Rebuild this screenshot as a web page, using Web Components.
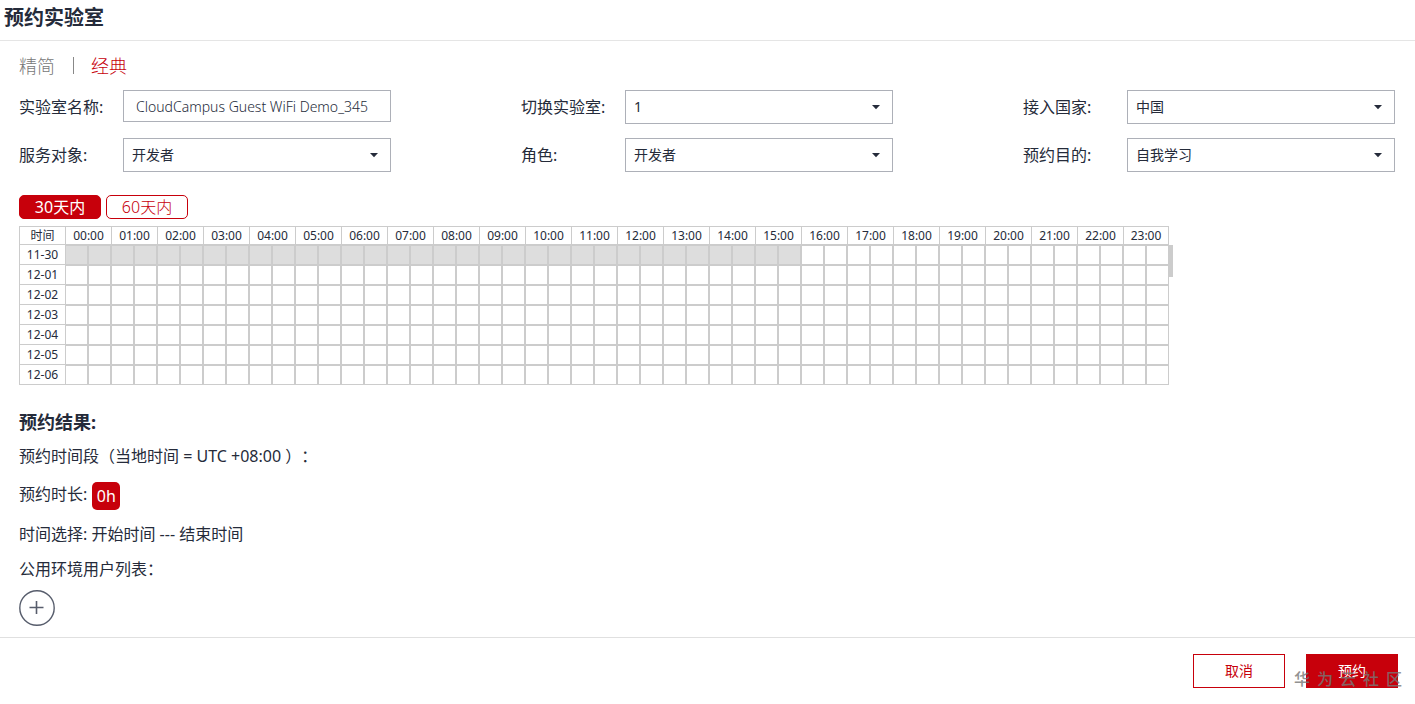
<!DOCTYPE html>
<html lang="zh-CN">
<head>
<meta charset="utf-8">
<meta name="viewport" content="width=device-width, initial-scale=1">
<title>预约实验室</title>
<style>
  body {
    margin: 0;
    background: #fff;
    color: #252b3a;
    font: 400 16px/24px "Noto Sans", "Noto Sans CJK SC", sans-serif;
    text-spacing-trim: space-all;
    --red: #c7000b;
    --line: #ccc;
  }
</style>
</head>
<body>
<lab-booking></lab-booking>

<template id="booking-tpl">
  <style>
    :host { display: block; }
    header { height: 40px; padding: 0 4px; border-bottom: 1px solid #e5e5e5; }
    h1 { margin: 0; font-size: 20px; line-height: 36px; font-weight: 700; }
    main { padding: 12px 20px 11px 19px; }
    .fields { display: grid; grid-template-columns: repeat(3, 1fr); gap: 14px 130px; margin-top: 12px; }
    footer { display: flex; justify-content: flex-end; gap: 21px; padding: 16px 17px; border-top: 1px solid #e0e0e0; position: relative; }
    .mark { position: absolute; right: 13px; top: 29px; display: flex; gap: 7px; font-size: 16px; line-height: 24px; font-weight: 500; color: #777; opacity: .8; pointer-events: none; }
  </style>
  <header><h1>预约实验室</h1></header>
  <main>
    <mode-tabs></mode-tabs>
    <div class="fields">
      <text-field label="实验室名称:" value="CloudCampus Guest WiFi Demo_345"></text-field>
      <select-field label="切换实验室:" value="1"></select-field>
      <select-field label="接入国家:" value="中国"></select-field>
      <select-field label="服务对象:" value="开发者"></select-field>
      <select-field label="角色:" value="开发者"></select-field>
      <select-field label="预约目的:" value="自我学习"></select-field>
    </div>
    <range-switch></range-switch>
    <time-grid></time-grid>
    <booking-result></booking-result>
  </main>
  <footer>
    <action-button>取消</action-button>
    <action-button primary>预约</action-button>
    <span class="mark"><span>华</span><span>为</span><span>云</span><span>社</span><span>区</span></span>
  </footer>
</template>

<template id="tabs-tpl">
  <style>
    :host { display: flex; align-items: center; height: 25px; font-size: 18px; font-weight: 300; }
    a { color: #777; text-decoration: none; line-height: 24px; }
    a.on { color: var(--red); }
    i { width: 1px; height: 17px; margin: 0 17px 0 18px; background: #888; }
  </style>
  <a href="#simple">精简</a><i></i><a href="#classic" class="on">经典</a>
</template>

<template id="text-tpl">
  <style>
    :host { display: flex; }
    label { width: 104px; flex: none; line-height: 34px; }
    input { box-sizing: border-box; flex: 1; min-width: 0; height: 32px; padding: 0 12px; border: 1px solid #adb0b8; border-radius: 0; background: #fff; color: #252b3a; font: inherit; font-size: 14px; font-weight: 300; outline: 0; }
  </style>
  <label for="c"></label><input id="c" type="text">
</template>

<template id="select-tpl">
  <style>
    :host { display: flex; position: relative; }
    label { width: 104px; flex: none; line-height: 34px; }
    select { box-sizing: border-box; flex: 1; min-width: 0; height: 34px; padding: 0 30px 0 8px; border: 1px solid #adb0b8; border-radius: 0; background: #fff; color: #252b3a; font: inherit; font-size: 14px; appearance: none; outline: 0; }
    svg { position: absolute; right: 13px; top: 15px; pointer-events: none; }
  </style>
  <label for="c"></label><select id="c"></select>
  <svg width="8" height="5" viewBox="0 0 8 5" aria-hidden="true"><path d="M0 0H8L4 4.3Z" fill="#252b3a"/></svg>
</template>

<template id="range-tpl">
  <style>
    :host { display: flex; gap: 5px; margin-top: 23px; }
    button { box-sizing: border-box; width: 82px; height: 24px; padding: 0; border: 1px solid var(--red); border-radius: 5px; background: #fff; color: var(--red); font: inherit; font-weight: 300; line-height: 22px; }
    button.on { background: var(--red); color: #fff; font-weight: 400; }
  </style>
  <button class="on">30天内</button><button>60天内</button>
</template>

<template id="grid-tpl">
  <style>
    :host { display: block; position: relative; width: 1150px; margin-top: 7px; }
    table { width: 100%; table-layout: fixed; border-collapse: separate; border-spacing: 0; font-size: 12px; line-height: 18px; }
    th, td { box-sizing: border-box; padding: 0; border: 1px solid var(--line); font-weight: 400; text-align: center; }
    thead th { height: 19px; line-height: 17px; border-right-width: 0; }
    thead th:last-child { border-right-width: 1px; }
    tbody th, td { height: 20px; }
    tbody th { border-right-width: 0; border-top-width: 0; }
    td.past { background: #ddd; }
    .first { width: 46px; }
    .thumb { position: absolute; left: 100%; top: 19px; width: 4px; height: 32px; background: #ccc; }
  </style>
  <table>
    <colgroup></colgroup>
    <thead><tr></tr></thead>
    <tbody></tbody>
  </table>
  <div class="thumb"></div>
</template>

<template id="result-tpl">
  <style>
    :host { display: block; padding-top: 25px; }
    h2 { margin: 0 0 10px; font-size: 18px; line-height: 24px; font-weight: 700; }
    p { margin: 0; line-height: 24px; }
    .len { display: flex; gap: 5px; margin: 14px 0 12px; align-items: flex-start; }
    .badge { width: 28px; height: 28px; border-radius: 5px; background: var(--red); color: #fff; line-height: 28px; text-align: center; }
    .users { margin: 11px 0 9px; }
    button { display: block; width: 36px; height: 36px; padding: 0; border: 0; background: none; }
    svg { display: block; }
  </style>
  <h2>预约结果:</h2>
  <p>预约时间段（当地时间 = UTC +08:00 ）：</p>
  <p class="len"><span>预约时长:</span><span class="badge">0h</span></p>
  <p>时间选择: 开始时间 --- 结束时间</p>
  <p class="users">公用环境用户列表：</p>
  <button aria-label="添加用户">
    <svg width="36" height="36" viewBox="0 0 36 36" fill="none" stroke="#575d6c"><circle cx="18" cy="18" r="17.2" stroke-width="1.4"/><path d="M10.5 17.5H24.5M17.5 11V24" stroke-width="1.6"/></svg>
  </button>
</template>

<template id="button-tpl">
  <style>
    :host { display: block; }
    button { box-sizing: border-box; width: 92px; height: 34px; padding: 0; border: 1px solid var(--red); background: #fff; color: var(--red); font: inherit; font-size: 14px; }
    :host([primary]) button { background: var(--red); color: #fff; }
  </style>
  <button><slot></slot></button>
</template>

<script>
  class Base extends HTMLElement {
    constructor() {
      super();
      const tpl = document.getElementById(this.constructor.tpl);
      this.attachShadow({ mode: "open" }).append(tpl.content.cloneNode(true));
    }
    $(sel) { return this.shadowRoot.querySelector(sel); }
  }
  const define = (name, tpl, setup) => customElements.define(name, class extends Base {
    static tpl = tpl;
    connectedCallback() { if (setup) setup(this); }
  });

  define("mode-tabs", "tabs-tpl");
  define("range-switch", "range-tpl");
  define("booking-result", "result-tpl");
  define("action-button", "button-tpl");

  define("text-field", "text-tpl", el => {
    el.$("label").textContent = el.getAttribute("label");
    el.$("input").value = el.getAttribute("value");
  });

  define("select-field", "select-tpl", el => {
    el.$("label").textContent = el.getAttribute("label");
    el.$("select").replaceChildren(new Option(el.getAttribute("value")));
  });

  define("time-grid", "grid-tpl", el => {
    const days = ["11-30", "12-01", "12-02", "12-03", "12-04", "12-05", "12-06"];
    const pastSlots = 32;
    const hours = Array.from({ length: 24 }, (_, h) => String(h).padStart(2, "0") + ":00");
    el.$("colgroup").innerHTML = '<col class="first">' + "<col>".repeat(48);
    el.$("thead tr").innerHTML = '<th scope="col">时间</th>' +
      hours.map(h => `<th scope="col" colspan="2">${h}</th>`).join("");
    el.$("tbody").innerHTML = days.map((d, row) => `<tr><th scope="row">${d}</th>` +
      Array.from({ length: 48 }, (_, i) => `<td${row === 0 && i < pastSlots ? ' class="past"' : ""}></td>`).join("") +
      "</tr>").join("");
  });

  define("lab-booking", "booking-tpl");
</script>
</body>
</html>
